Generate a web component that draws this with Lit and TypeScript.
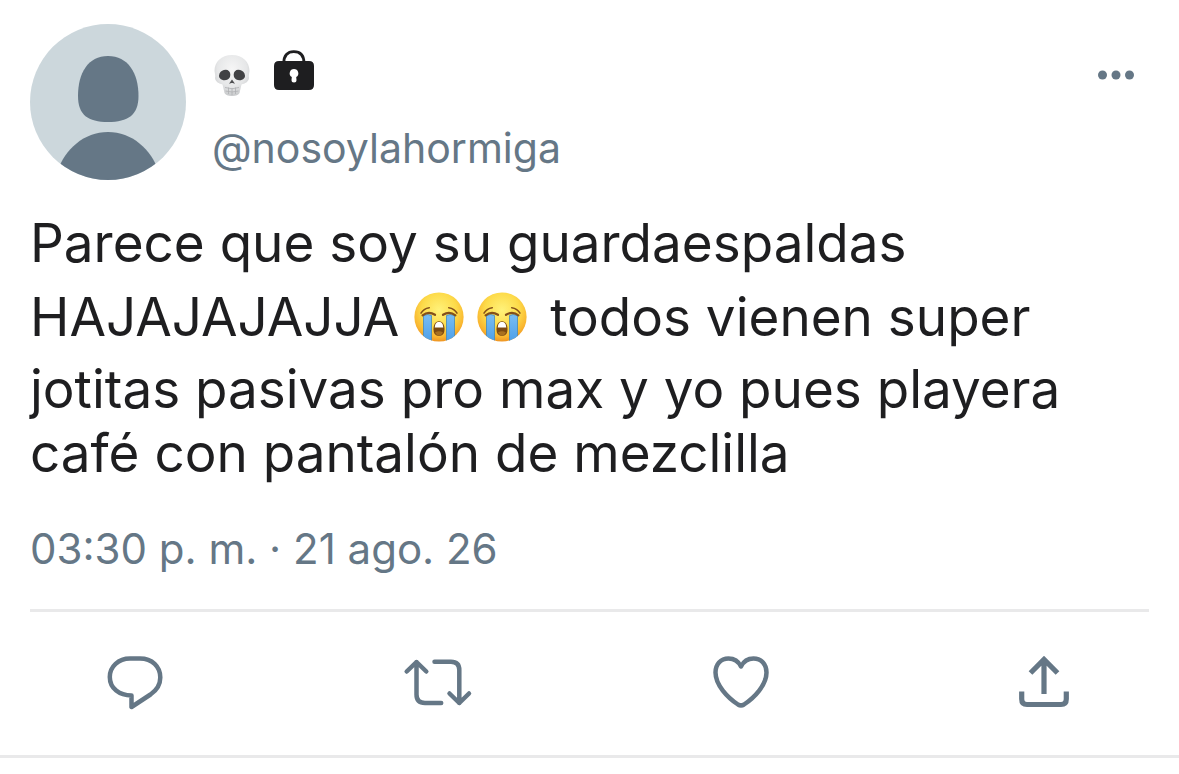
import { LitElement, html, css, svg } from "lit";
import { customElement, property } from "lit/decorators.js";

@customElement("sob-emoji")
class SobEmoji extends LitElement {
  static styles = css`
    :host {
      display: block;
    }
    svg {
      display: block;
      width: 50px;
      height: 82px;
    }
  `;
  render() {
    return html`<svg viewBox="0 -17 50 82" role="img" aria-label="😭">
      <defs>
        <radialGradient id="face" cx="0.5" cy="0.36" r="0.64">
          <stop offset="0" stop-color="#fff27a" />
          <stop offset="0.55" stop-color="#fddb4a" />
          <stop offset="0.85" stop-color="#f9b52f" />
          <stop offset="1" stop-color="#ee9423" />
        </radialGradient>
        <linearGradient id="tear" x1="0" y1="0" x2="0" y2="1">
          <stop offset="0" stop-color="#79bdf3" />
          <stop offset="1" stop-color="#4c9fe8" />
        </linearGradient>
        <clipPath id="round"><circle cx="25" cy="25" r="24.6" /></clipPath>
      </defs>
      <circle cx="25" cy="25" r="24.6" fill="url(#face)" />
      <g clip-path="url(#round)">
        <path d="M9.5 23.5Q14 21.5 17.5 23.5L17.5 50H9.5Z" fill="url(#tear)" stroke="#4389bd" stroke-width=".8" />
        <path d="M32.5 23.5Q36 21.5 40.5 23.5V50H32.5Z" fill="url(#tear)" stroke="#4389bd" stroke-width=".8" />
      </g>
      <g fill="none" stroke="#84501a" stroke-linecap="round">
        <path d="M7 21.2Q9.5 16.5 15.3 15.7" stroke-width="1.5" />
        <path d="M43 21.2Q40.5 16.5 34.7 15.7" stroke-width="1.5" />
        <path d="M8.6 23.3Q14.5 18.8 21 22.8" stroke-width="2.2" />
        <path d="M41.4 23.3Q35.5 18.8 29 22.8" stroke-width="2.2" />
      </g>
      <path d="M25 29.2C29 29.2 30.5 33 30.5 37.500C30.5 41.8 28.3 43.8 25 43.8S19.5 41.8 19.500 37.500C19.5 33 21 29.2 25 29.200Z" fill="#7c4a12" />
      <path d="M21.2 32.8C22 30.5 23.3 30 25 30S28 30.500 28.8 32.8L29.3 35.6H20.700Z" fill="#fff" />
      <path d="M21 40.5Q25 37.8 29 40.5Q28 43.2 25 43.2T21 40.5Z" fill="#a9701f" />
    </svg>`;
  }
}

const icons = {
  reply: svg`<path d="M28 18.5H38C50 18.5 58.3 26.5 58.3 37.5C58.3 45 55 50 48.5 54.5L29.5 67V55.5C17.5 55.5 7.8 48.5 7.8 37C7.8 26.5 16.5 18.5 28 18.5Z"/>`,
  repost: svg`<path d="M1.7 31.5L11.5 22L21.3 31.5M11.5 22V54.5Q11.5 63 20 63H36.2M29.5 21.7H46Q54.3 21.7 54.3 30V63M44.5 53.5L54.3 63L64 53.5" stroke-linecap="round"/>`,
  like: svg`<path d="M33 26.500C30 20.5 25.5 18.5 20.5 18.5C12.5 18.5 7.5 24.5 7.5 32.5C7.5 45 19.5 57.5 30 64.5Q33 66.300 36 64.5C46.5 57.5 58.5 45 58.5 32.500C58.5 24.5 53.5 18.5 45.5 18.5C40.5 18.5 36 20.5 33 26.500Z"/>`,
  share: svg`<path d="M33 54V20M19.500 33L33 19.5L46.5 33M10.7 51.5V59Q10.7 64.5 16 64.5H50Q55.3 64.5 55.3 59V51.5" stroke-linejoin="miter" stroke-width="5.2"/>`,
};

@customElement("action-button")
class ActionButton extends LitElement {
  @property() icon: keyof typeof icons = "reply";
  @property() label = "";
  static styles = css`
    button {
      display: block;
      padding: 0;
      border: 0;
      background: none;
      color: #657786;
      cursor: pointer;
    }
    svg {
      display: block;
      width: 66px;
      height: 84px;
      fill: none;
      stroke: currentColor;
      stroke-width: 4.5;
      stroke-linejoin: round;
      overflow: visible;
    }
  `;
  render() {
    return html`<button type="button" aria-label=${this.label}>
      <svg viewBox="0 0 66 84" aria-hidden="true">${icons[this.icon]}</svg>
    </button>`;
  }
}

@customElement("app-root")
class AppRoot extends LitElement {
  static styles = css`
    :host {
      display: block;
      background: #fff;
      color: #1e1e20;
      font-family: Inter, "Liberation Sans", sans-serif;
    }
    .post {
      padding: 24px 30px 0;
      border-bottom: 3px solid #e9e9ea;
    }
    .header {
      display: flex;
      gap: 26px;
    }
    .avatar {
      flex: none;
      width: 156px;
      height: 156px;
    }
    .author {
      flex: 1;
      padding-top: 24px;
    }
    .name {
      display: flex;
      gap: 22px;
      height: 52px;
    }
    .name svg {
      display: block;
      width: 40px;
      height: 52px;
    }
    .handle {
      display: inline-block;
      margin-top: 22px;
      color: #657786;
      font-size: 41px;
      line-height: 52px;
      text-decoration: none;
    }
    .more {
      align-self: flex-start;
      margin: 38px 12px 0 0;
      padding: 0;
      border: 0;
      background: none;
      color: #657786;
      cursor: pointer;
    }
    .more svg {
      display: block;
      width: 42px;
      height: 26px;
      fill: currentColor;
    }
    .text {
      margin: 31px 0 0;
      font-size: 53px;
      line-height: 64px;
    }
    .emojis {
      display: inline-flex;
      gap: 13px;
      height: 82px;
      vertical-align: -21px;
      margin-right: 8px;
    }
    .date {
      display: block;
      margin-top: 38px;
      color: #657786;
      font-size: 42px;
      line-height: 52px;
    }
    .actions {
      display: flex;
      justify-content: space-between;
      margin-top: 34px;
      padding: 28px 72px 31px;
      border-top: 3px solid #e9e9ea;
    }
  `;
  render() {
    return html`<article class="post">
      <header class="header">
        <svg class="avatar" viewBox="0 0 156 156" role="img" aria-label="Avatar">
          <clipPath id="disc"><circle cx="78" cy="78" r="78" /></clipPath>
          <g clip-path="url(#disc)">
            <path fill="#ccd7dc" d="M0 0H156V156H0Z" />
            <path fill="#657786" d="M78 32C98 32 108.500 49 108.500 72C108.500 91 98 98 78 98S48 91 48 72C48 49 58 32 78 32Z" />
            <path fill="#657786" d="M27 148C35 125 54 108 78 108S121 125 129 148V156H27Z" />
          </g>
        </svg>
        <div class="author">
          <div class="name">
            <svg viewBox="0 0 40 52" role="img" aria-label="💀">
              <defs>
                <radialGradient id="bone" cx=".5" cy=".35" r=".7">
                  <stop offset="0" stop-color="#f6f6f6" />
                  <stop offset=".6" stop-color="#e6e7e8" />
                  <stop offset="1" stop-color="#c0c2c4" />
                </radialGradient>
              </defs>
              <path fill="url(#bone)" d="M20 7C31 7 37.500 14 37.500 23C37 26 36.500 28 37 30C36.500 34 33 35.500 29.500 36.500L27.500 45Q26 48 20 48T12.500 45L10.500 36.500C7 35.500 3.500 34 3 30C3.500 28 3 26 2.500 23C2.500 14 9 7 20 7Z" />
              <path fill="#414244" d="M7.500 25.500Q10 21.200 15.500 22Q19.300 24 18 29Q15.800 32.800 11.300 32.200Q5.500 30.500 7.500 25.500ZM32.500 25.500Q30 21.200 24.500 22Q20.700 24 22 29Q24.200 32.800 28.700 32.200Q34.500 30.500 32.500 25.500Z" />
              <path fill="#4e4f51" d="M20 31.500L23 35.800L20.500 35H19.500L17 35.800Z" />
              <path fill="none" stroke="#aeb0b2" stroke-width=".8" d="M13 39.500Q20 42 27 39.500M13.500 43Q20 45 26.500 43M16.500 39.500V46M20 40V47M23.500 39.500V46" />
            </svg>
            <svg viewBox="0 0 40 52" role="img" aria-label="Cuenta protegida">
              <path fill="none" stroke="#1e1e20" stroke-width="2.800" d="M9.800 15C9.800 7.500 13.500 3.600 19.800 3.600S30 7.500 30 15" />
              <path fill="#1e1e20" fill-rule="evenodd" d="M5 13H35Q40 13 40 18V37Q40 42 35 42H5Q0 42 0 37V18Q0 13 5 13ZM20 21A4.300 4.300 0 0 0 17.800 29L17.500 32Q17.500 34.500 20 34.500T22.500 32L22.200 29A4.300 4.300 0 0 0 20 21Z" />
            </svg>
          </div>
          <a class="handle" href="#nosoylahormiga">@nosoylahormiga</a>
        </div>
        <button class="more" type="button" aria-label="Más opciones">
          <svg viewBox="0 0 42 26" aria-hidden="true">
            <circle cx="7.500" cy="13" r="4.500" />
            <circle cx="21" cy="13" r="4.500" />
            <circle cx="34.500" cy="13" r="4.500" />
          </svg>
        </button>
      </header>
      <p class="text">
        Parece que soy su guardaespaldas HAJAJAJAJJA
        <span class="emojis"><sob-emoji></sob-emoji><sob-emoji></sob-emoji></span>
        todos vienen super jotitas pasivas pro max y yo pues playera café con
        pantalón de mezclilla
      </p>
      <time class="date" datetime="2026-08-21T15:30">03:30 p. m. · 21 ago. 26</time>
      <footer class="actions">
        <action-button icon="reply" label="Responder"></action-button>
        <action-button icon="repost" label="Retwittear"></action-button>
        <action-button icon="like" label="Me gusta"></action-button>
        <action-button icon="share" label="Compartir"></action-button>
      </footer>
    </article>`;
  }
}
